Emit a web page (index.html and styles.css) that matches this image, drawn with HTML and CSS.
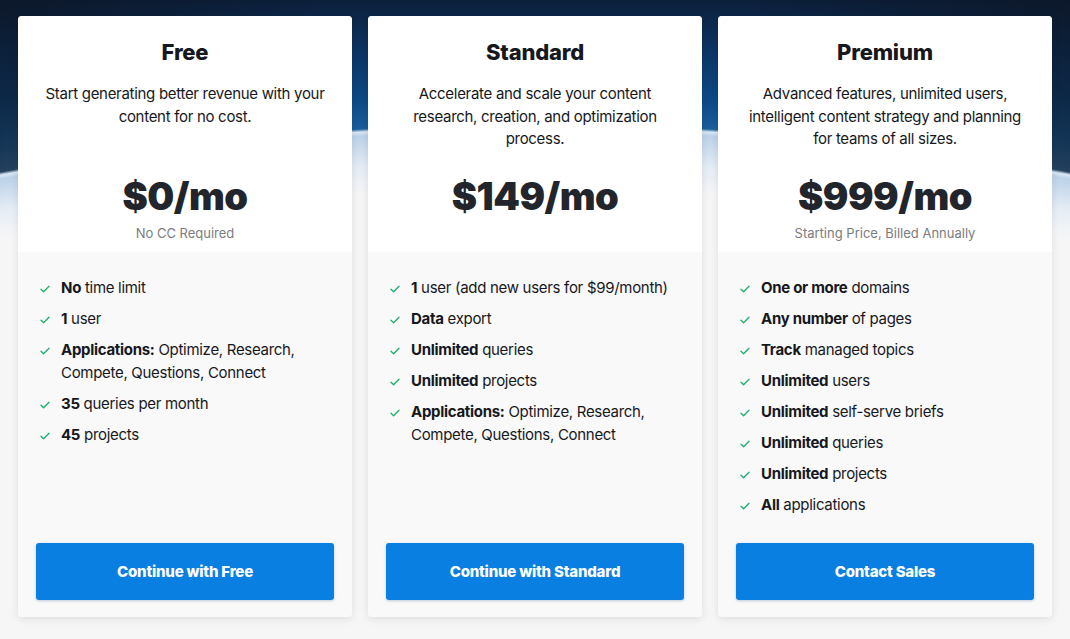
FILE: index.html
```html
<!DOCTYPE html>
<html lang="en">
<head>
<meta charset="utf-8">
<title>Pricing</title>
<link rel="stylesheet" href="styles.css">
</head>
<body>
<main class="plans">
  <section class="card">
    <header class="card-head">
      <h2 class="plan-name">Free</h2>
      <p class="plan-desc">Start generating better revenue with your content for no cost.</p>
      <div class="price">$0/mo</div>
      <div class="price-note">No CC Required</div>
    </header>
    <div class="card-body">
      <ul class="features">
        <li><svg class="check" viewBox="0 0 10 8"><polyline points="1,4.2 3.6,6.8 9,1.2"/></svg><p class="feat"><b>No</b> time limit</p></li>
        <li><svg class="check" viewBox="0 0 10 8"><polyline points="1,4.2 3.6,6.8 9,1.2"/></svg><p class="feat"><b>1</b> user</p></li>
        <li><svg class="check" viewBox="0 0 10 8"><polyline points="1,4.2 3.6,6.8 9,1.2"/></svg><p class="feat"><b>Applications:</b> Optimize, Research,<br>Compete, Questions, Connect</p></li>
        <li><svg class="check" viewBox="0 0 10 8"><polyline points="1,4.2 3.6,6.8 9,1.2"/></svg><p class="feat"><b>35</b> queries per month</p></li>
        <li><svg class="check" viewBox="0 0 10 8"><polyline points="1,4.2 3.6,6.8 9,1.2"/></svg><p class="feat"><b>45</b> projects</p></li>
      </ul>
      <a class="btn" href="#">Continue with Free</a>
    </div>
  </section>

  <section class="card">
    <header class="card-head">
      <h2 class="plan-name">Standard</h2>
      <p class="plan-desc">Accelerate and scale your content research, creation, and optimization process.</p>
      <div class="price">$149/mo</div>
      <div class="price-note"></div>
    </header>
    <div class="card-body">
      <ul class="features">
        <li><svg class="check" viewBox="0 0 10 8"><polyline points="1,4.2 3.6,6.8 9,1.2"/></svg><p class="feat"><b>1</b> user (add new users for $99/month)</p></li>
        <li><svg class="check" viewBox="0 0 10 8"><polyline points="1,4.2 3.6,6.8 9,1.2"/></svg><p class="feat"><b>Data</b> export</p></li>
        <li><svg class="check" viewBox="0 0 10 8"><polyline points="1,4.2 3.6,6.8 9,1.2"/></svg><p class="feat"><b>Unlimited</b> queries</p></li>
        <li><svg class="check" viewBox="0 0 10 8"><polyline points="1,4.2 3.6,6.8 9,1.2"/></svg><p class="feat"><b>Unlimited</b> projects</p></li>
        <li><svg class="check" viewBox="0 0 10 8"><polyline points="1,4.2 3.6,6.8 9,1.2"/></svg><p class="feat"><b>Applications:</b> Optimize, Research,<br>Compete, Questions, Connect</p></li>
      </ul>
      <a class="btn" href="#">Continue with Standard</a>
    </div>
  </section>

  <section class="card">
    <header class="card-head">
      <h2 class="plan-name">Premium</h2>
      <p class="plan-desc">Advanced features, unlimited users, intelligent content strategy and planning for teams of all sizes.</p>
      <div class="price">$999/mo</div>
      <div class="price-note">Starting Price, Billed Annually</div>
    </header>
    <div class="card-body">
      <ul class="features">
        <li><svg class="check" viewBox="0 0 10 8"><polyline points="1,4.2 3.6,6.8 9,1.2"/></svg><p class="feat"><b>One or more</b> domains</p></li>
        <li><svg class="check" viewBox="0 0 10 8"><polyline points="1,4.2 3.6,6.8 9,1.2"/></svg><p class="feat"><b>Any number</b> of pages</p></li>
        <li><svg class="check" viewBox="0 0 10 8"><polyline points="1,4.2 3.6,6.8 9,1.2"/></svg><p class="feat"><b>Track</b> managed topics</p></li>
        <li><svg class="check" viewBox="0 0 10 8"><polyline points="1,4.2 3.6,6.8 9,1.2"/></svg><p class="feat"><b>Unlimited</b> users</p></li>
        <li><svg class="check" viewBox="0 0 10 8"><polyline points="1,4.2 3.6,6.8 9,1.2"/></svg><p class="feat"><b>Unlimited</b> self-serve briefs</p></li>
        <li><svg class="check" viewBox="0 0 10 8"><polyline points="1,4.2 3.6,6.8 9,1.2"/></svg><p class="feat"><b>Unlimited</b> queries</p></li>
        <li><svg class="check" viewBox="0 0 10 8"><polyline points="1,4.2 3.6,6.8 9,1.2"/></svg><p class="feat"><b>Unlimited</b> projects</p></li>
        <li><svg class="check" viewBox="0 0 10 8"><polyline points="1,4.2 3.6,6.8 9,1.2"/></svg><p class="feat"><b>All</b> applications</p></li>
      </ul>
      <a class="btn" href="#">Contact Sales</a>
    </div>
  </section>
</main>
</body>
</html>
```
FILE: styles.css
```css
* { box-sizing: border-box; }

html, body {
  margin: 0;
  height: 100%;
}

body {
  width: 1070px;
  height: 639px;
  overflow: hidden;
  font-family: Inter, "Liberation Sans", sans-serif;
  color: #16181d;
  background:
    radial-gradient(circle 3000px at 50% 3125px,
      #f6f6f7 0, #f6f6f7 2935px, #e6edf5 2962px, #bcd2e9 2994px, #d9e8f6 2998px, rgba(40,100,160,0) 3001px),
    linear-gradient(to right, rgba(12,18,30,0.6) 0, rgba(12,18,30,0) 30%, rgba(12,18,30,0) 70%, rgba(12,18,30,0.6) 100%),
    linear-gradient(to bottom, #0c1f3a 0, #0c3564 50px, #0d4a85 100px, #1f66a4 140px, #4b86bb 175px);
}

.plans {
  display: flex;
  gap: 16px;
  padding: 16px 18px 0;
}

.card {
  flex: 1 1 0;
  height: 601px;
  display: flex;
  flex-direction: column;
  border-radius: 4px;
  overflow: hidden;
  background: #f9f9f9;
  box-shadow: 0 2px 8px rgba(0, 0, 0, 0.10);
}

.card-head {
  height: 236px;
  background: #fff;
  padding: 21px 22px 10px;
  display: flex;
  flex-direction: column;
  align-items: center;
  text-align: center;
}

.plan-name {
  margin: 0;
  font-size: 22px;
  line-height: 30px;
  font-weight: 800;
  letter-spacing: -0.2px;
}

.plan-desc {
  margin: 16px 0 0;
  height: 68px;
  font-size: 15px;
  line-height: 22.5px;
  letter-spacing: -0.3px;
}

.price {
  margin-top: 23px;
  font-size: 38px;
  line-height: 44px;
  font-weight: 900;
  color: #22252b;
  letter-spacing: -0.5px;
}

.price-note {
  margin-top: 6px;
  height: 18px;
  font-size: 13px;
  line-height: 18px;
  color: #7a7c80;
}

.card-body {
  flex: 1;
  display: flex;
  flex-direction: column;
  padding: 24px 18px 17px;
}

.features {
  list-style: none;
  margin: 0;
  padding: 0 4px;
  display: flex;
  flex-direction: column;
  gap: 8px;
}

.features li {
  display: flex;
  align-items: flex-start;
  gap: 11px;
}

.feat {
  margin: 0;
  font-size: 15px;
  line-height: 23px;
  letter-spacing: -0.3px;
}

.feat b {
  font-weight: 700;
}

.check {
  flex: none;
  width: 10px;
  height: 8px;
  margin-top: 9px;
  fill: none;
  stroke: #1fae6e;
  stroke-width: 1.3;
  stroke-linecap: round;
  stroke-linejoin: round;
}

.btn {
  margin-top: auto;
  height: 57px;
  display: flex;
  align-items: center;
  justify-content: center;
  background: #0a7fe2;
  color: #fff;
  border-radius: 3px;
  text-decoration: none;
  font-size: 15px;
  font-weight: 800;
  letter-spacing: -0.2px;
  box-shadow: 0 1px 3px rgba(0, 60, 120, 0.25);
}
```
